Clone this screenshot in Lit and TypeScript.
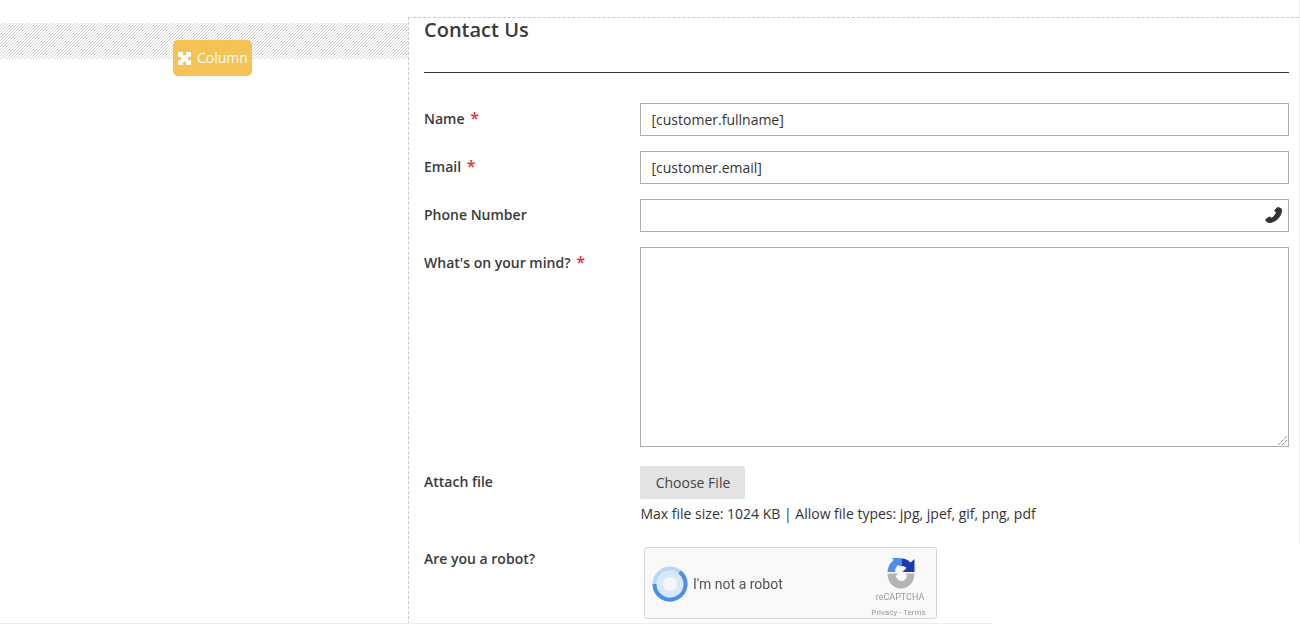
import { LitElement, html, css } from "lit";
import { customElement } from "lit/decorators.js";

@customElement("app-root")
export class AppRoot extends LitElement {
  static styles = css`
    :host {
      display: block;
      width: 1300px;
      height: 624px;
      overflow: hidden;
      background: #fff;
      font-family: "Open Sans", sans-serif;
      color: #333;
      font-size: 14px;
    }
    * { box-sizing: border-box; }
    .page {
      position: relative;
      display: flex;
      width: 1300px;
      height: 624px;
      padding-top: 17px;
    }
    .scroll-edge {
      position: absolute;
      right: 0;
      top: 0;
      width: 1px;
      height: 544px;
      background: #f0f0f0;
    }
    .bottom-edge {
      position: absolute;
      left: 0;
      bottom: 0;
      width: 992px;
      height: 1px;
      background: #ececec;
    }
    .left {
      width: 408px;
      flex: none;
      padding-top: 6px;
      position: relative;
    }
    .hatch { display: block; width: 408px; height: 36px; }
    .badge {
      position: absolute;
      left: 173px;
      top: 23px;
      width: 79px;
      height: 36px;
      border-radius: 5px;
      background: rgba(244, 190, 72, 0.92);
      color: #fff;
      display: flex;
      align-items: center;
      gap: 6px;
      padding-left: 5px;
      font-size: 14px;
      white-space: nowrap;
    }
    .badge svg { width: 13px; height: 13px; flex: none; }
    .badge span { margin-bottom: 2px; }
    .right {
      width: 891px;
      flex: none;
      border-left: 1px dashed #c8c8c8;
      border-top: 1px dashed #c8c8c8;
      padding: 0 10px 0 15px;
    }
    h1 {
      margin: -2px 0 0;
      font-size: 20px;
      font-weight: 600;
      line-height: 27px;
      height: 57px;
      color: #3a3a3a;
      border-bottom: 1px solid #333;
    }
    .row {
      display: grid;
      grid-template-columns: 216px 649px;
    }
    label {
      font-weight: 600;
      font-size: 14px;
      line-height: 19px;
      padding-top: 6px;
      color: #3a3a3a;
    }
    .req { color: #e8302b; font-size: 16px; margin-left: 2px; font-weight: 600; }
    .field {
      position: relative;
      height: 33px;
      border: 1px solid #adadad;
      padding: 0 10px;
      line-height: 31px;
      font-size: 14px;
      color: #333;
    }
    .field.val { padding-left: 10.5px; }
    .name { margin-top: 30px; }
    .gap { margin-top: 15px; }
    .phone {
      position: absolute;
      right: 6px;
      top: 7px;
      width: 17px;
      height: 16px;
    }
    .area { height: 200px; position: relative; }
    .grip { position: absolute; right: 1px; bottom: 1px; width: 9px; height: 9px; }
    .attach { margin-top: 19px; }
    .file {
      display: inline-block;
      height: 33px;
      width: 105px;
      padding-left: 1px;
      background: #e3e3e3;
      border-radius: 2px;
      text-align: center;
      line-height: 33px;
      color: #444;
    }
    .note { margin-top: 5px; line-height: 20px; padding-left: 0.5px; }
    .robot-row { margin-top: 19px; }
    .captcha {
      margin: 4px 0 0 4px;
      width: 293px;
      height: 72px;
      border: 1px solid #d3d3d3;
      border-radius: 3px;
      background: #f9f9f9;
      display: flex;
      align-items: center;
      padding: 1px 0 0 7px;
      position: relative;
      font-family: Roboto, sans-serif;
      filter: blur(0.35px);
    }
    .captcha .ring { width: 36px; height: 36px; flex: none; }
    .captcha .txt { margin-left: 5px; font-size: 14px; color: #555; }
    .brand {
      position: absolute;
      right: 8px;
      top: 9px;
      width: 56px;
      display: flex;
      flex-direction: column;
      align-items: center;
      color: #999;
    }
    .brand svg { width: 32px; height: 32px; margin-left: 2px; }
    .brand .b1 { font-size: 9px; line-height: 12px; margin-top: 2px; }
    .brand .b2 { font-size: 8px; line-height: 10px; margin-top: 5px; margin-right: 3px; white-space: nowrap; }
  `;

  render() {
    return html`
      <div class="page">
        <div class="left">
          <svg class="hatch" aria-hidden="true">
            <defs>
              <pattern id="hatch" patternUnits="userSpaceOnUse" width="3" height="3">
                <path d="M-1 1L1 -1M0 3L3 0M2 4L4 2" stroke="#d2d2d2" stroke-width="1" fill="none"/>
              </pattern>
            </defs>
            <rect width="408" height="36" fill="url(#hatch)"/>
          </svg>
          <div class="badge">
            <svg viewBox="0 0 14 14" fill="#fff">
              <path d="M0 0h6L4.500 1.500 7 4 9.500 1.500 8 0h6v6l-1.500-1.500L10 7l2.500 2.500L14 8v6H8l1.500-1.500L7 10l-2.500 2.500L6 14H0V8l1.500 1.500L4 7 1.500 4.500 0 6z"/>
              <rect x="1.500" y="1.500" width="3" height="3"/>
              <rect x="9.500" y="1.500" width="3" height="3"/>
              <rect x="1.500" y="9.500" width="3" height="3"/>
              <rect x="9.500" y="9.500" width="3" height="3"/>
            </svg>
            <span>Column</span>
          </div>
        </div>
        <div class="right">
          <h1>Contact Us</h1>
          <div class="row name">
            <label>Name <span class="req">*</span></label>
            <div class="field val">[customer.fullname]</div>
          </div>
          <div class="row gap">
            <label>Email <span class="req">*</span></label>
            <div class="field val">[customer.email]</div>
          </div>
          <div class="row gap">
            <label>Phone Number</label>
            <div class="field">
              <svg class="phone" viewBox="0 0 17 16">
                <path fill="#333" stroke="#333" stroke-width="1" stroke-linejoin="round" d="M12.500 0.500c1.600.2 3 .8 4 1.700.3 3.300-1.100 6.700-3.500 9.300-2.600 2.700-6.200 4.300-9.600 4-1.200-.5-2.400-1.500-2.900-2.800l4-2.800 2.200 1.300c1.300-.7 2.500-1.800 3.400-3.100.7-1.100 1.100-2.200 1.200-3.200l-1.800-1.300z"/>
              </svg>
            </div>
          </div>
          <div class="row gap">
            <label>What's on your mind? <span class="req">*</span></label>
            <div class="field area">
              <svg class="grip" viewBox="0 0 9 9" stroke="#555" stroke-width="1" stroke-dasharray="1 1">
                <path d="M0 9L9 0M4 9L9 4"/>
              </svg>
            </div>
          </div>
          <div class="row attach">
            <label>Attach file</label>
            <div>
              <span class="file">Choose File</span>
              <div class="note">Max file size: 1024 KB | Allow file types: jpg, jpef, gif, png, pdf</div>
            </div>
          </div>
          <div class="row robot-row">
            <label>Are you a robot?</label>
            <div class="captcha">
              <svg class="ring" viewBox="0 0 36 36" fill="none">
                <circle cx="18" cy="18" r="15.500" stroke="#b9d6f8" stroke-width="4"/>
                <circle cx="18" cy="18" r="13.500" fill="#d9e7fa"/>
                <circle cx="18" cy="18" r="7" fill="#f4f6f9"/>
                <path d="M27.500 5.800A15.500 15.500 0 1 1 2.500 18" stroke="#4a90e8" stroke-width="4"/>
              </svg>
              <span class="txt">I'm not a robot</span>
              <div class="brand">
                <svg viewBox="0 0 32 32">
                  <path fill="#4a90e8" d="M2.500 15C3 9 6 5 9 3L6.500 1H16.500V10L13.500 8C11 9.500 10 12 10 15Z"/>
                  <path fill="#1c3aa9" d="M16.500 1.500C20 1.500 23 3 25.500 5.500L29.500 2V15H17.500L21.500 11C20 9.500 18.500 9 16.500 9Z"/>
                  <path fill="#b4b4b4" d="M2.500 16.500H13.500L10.500 19C12 22 14 24 16.500 24C19 24 21 22.500 22 19L20.500 16.500H29.500C29.500 25 24 31.500 16 31.500C8 31.500 2.500 25 2.500 16.500Z"/>
                </svg>
                <span class="b1">reCAPTCHA</span>
                <span class="b2">Privacy - Terms</span>
              </div>
            </div>
          </div>
        </div>
        <div class="scroll-edge"></div>
        <div class="bottom-edge"></div>
      </div>
    `;
  }
}
